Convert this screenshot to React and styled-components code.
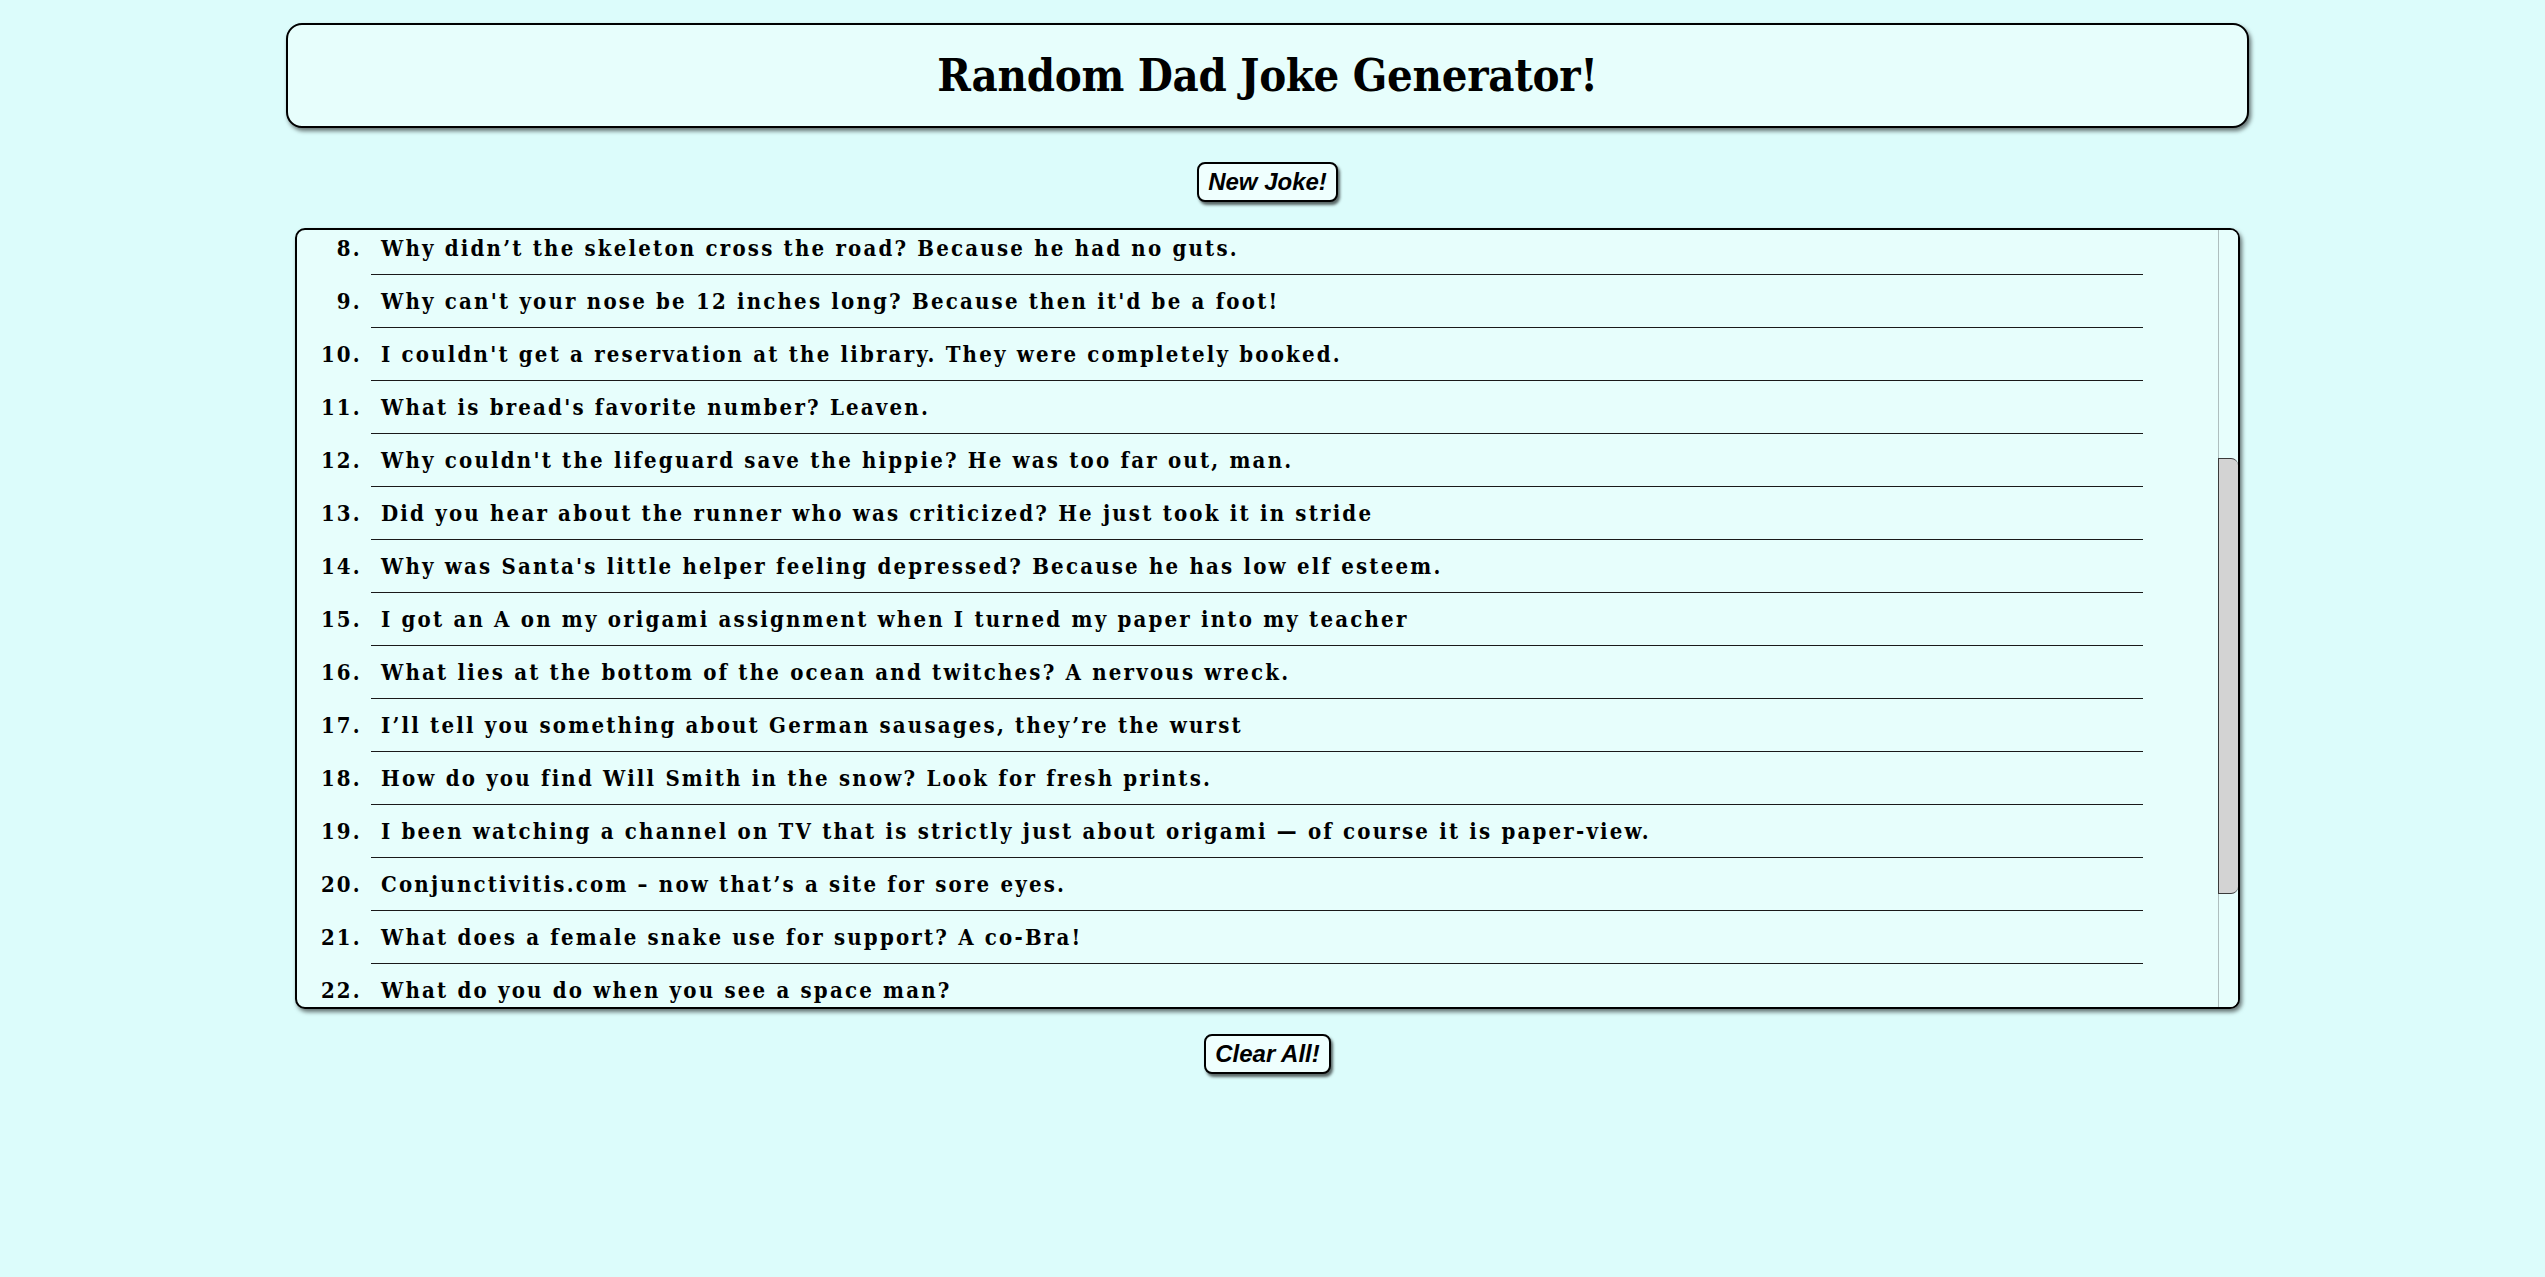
import React, { useLayoutEffect, useRef, useState } from "react";
import styled, { createGlobalStyle } from "styled-components";

const GlobalStyle = createGlobalStyle`
  html, body {
    margin: 0;
    padding: 0;
    background: #dcfcfb;
  }
  body {
    font-family: "DejaVu Serif", serif;
    color: #000;
  }
`;

const Page = styled.main`
  display: flex;
  flex-direction: column;
  align-items: center;
  padding: 23px 10px 0 0;
  min-height: 1254px;
`;

const Header = styled.header`
  box-sizing: border-box;
  width: 1963px;
  height: 105px;
  display: flex;
  align-items: center;
  justify-content: center;
  background: #e7fefc;
  border: 2px solid #000;
  border-radius: 16px;
  box-shadow: 2px 3px 4px rgba(0, 0, 0, 0.55);
`;

const Title = styled.h1`
  margin: 0;
  font-family: "DejaVu Serif Condensed", "DejaVu Serif", serif;
  font-stretch: condensed;
  font-weight: 700;
  font-size: 45px;
  letter-spacing: -0.3px;
  line-height: 1;
`;

const Button = styled.button`
  box-sizing: border-box;
  margin-top: ${(p) => p.$top}px;
  height: 40px;
  padding: 0 9px;
  background: #effffe;
  border: 2px solid #000;
  border-radius: 8px;
  box-shadow: 2px 3px 3px rgba(0, 0, 0, 0.6);
  font-family: "Liberation Sans", Arial, sans-serif;
  font-style: italic;
  font-weight: 700;
  font-size: 24px;
  color: #000;
  cursor: pointer;
`;

const ListBox = styled.section`
  box-sizing: border-box;
  margin-top: 26px;
  width: 1945px;
  height: 781px;
  display: flex;
  background: #e7fefc;
  border: 2px solid #000;
  border-radius: 10px;
  box-shadow: 2px 3px 4px rgba(0, 0, 0, 0.55);
  overflow: hidden;
`;

const ScrollArea = styled.div`
  flex: 1;
  overflow-y: scroll;
  overflow-x: hidden;
  scrollbar-width: none;
  &::-webkit-scrollbar {
    display: none;
  }
`;

const Track = styled.div`
  box-sizing: border-box;
  width: 20px;
  flex: none;
  border-left: 1px solid #aebebe;
  background: #e7fefc;
`;

const Thumb = styled.div`
  box-sizing: border-box;
  margin-left: -1px;
  width: 20px;
  background: #d3d3d3;
  border: 1px solid #3a3a3a;
  border-right: none;
  border-radius: 0 7px 7px 0;
`;

const JokeList = styled.ol`
  margin: 0 75px 0 74px;
  padding: 27px 0 33px 0;
  list-style: decimal outside;
`;

const JokeItem = styled.li`
  box-sizing: border-box;
  height: 53px;
  padding-left: 10px;
  line-height: 52px;
  border-bottom: 1px solid #1a1a1a;
  font-family: "DejaVu Serif Condensed", "DejaVu Serif", serif;
  font-stretch: condensed;
  font-weight: 700;
  font-size: 22px;
  letter-spacing: 2.2px;
  white-space: nowrap;

  &:last-child {
    border-bottom: none;
  }
`;

const jokes = [
  "What do you call a fake noodle? An impasta.",
  "I'm reading a book about anti-gravity. It's impossible to put down!",
  "Why don't eggs tell jokes? They'd crack each other up.",
  "What do you call a bear with no teeth? A gummy bear.",
  "I used to hate facial hair, but then it grew on me.",
  "Why did the scarecrow win an award? He was outstanding in his field.",
  "How does a penguin build its house? Igloos it together.",
  "Why didn’t the skeleton cross the road? Because he had no guts.",
  "Why can't your nose be 12 inches long? Because then it'd be a foot!",
  "I couldn't get a reservation at the library. They were completely booked.",
  "What is bread's favorite number? Leaven.",
  "Why couldn't the lifeguard save the hippie? He was too far out, man.",
  "Did you hear about the runner who was criticized? He just took it in stride",
  "Why was Santa's little helper feeling depressed? Because he has low elf esteem.",
  "I got an A on my origami assignment when I turned my paper into my teacher",
  "What lies at the bottom of the ocean and twitches? A nervous wreck.",
  "I’ll tell you something about German sausages, they’re the wurst",
  "How do you find Will Smith in the snow? Look for fresh prints.",
  "I been watching a channel on TV that is strictly just about origami — of course it is paper-view.",
  "Conjunctivitis.com – now that’s a site for sore eyes.",
  "What does a female snake use for support? A co-Bra!",
  "What do you do when you see a space man?",
  "Why do seagulls fly over the sea? Because if they flew over the bay, they'd be bagels.",
  "What do you call a factory that makes okay products? A satisfactory.",
  "Did you hear about the claustrophobic astronaut? He just needed a little space.",
];

export default function App() {
  const areaRef = useRef(null);
  const [thumb, setThumb] = useState({ top: 228, height: 436 });

  useLayoutEffect(() => {
    const el = areaRef.current;
    if (!el) return;
    const update = () => {
      const track = el.clientHeight;
      const ratio = el.clientHeight / el.scrollHeight;
      setThumb({
        top: Math.round((el.scrollTop / el.scrollHeight) * track),
        height: Math.round(ratio * track),
      });
    };
    el.scrollTop = 406;
    update();
    el.addEventListener("scroll", update);
    return () => el.removeEventListener("scroll", update);
  }, []);

  return (
    <>
      <GlobalStyle />
      <Page>
        <Header>
          <Title>Random Dad Joke Generator!</Title>
        </Header>
        <Button $top={34}>New Joke!</Button>
        <ListBox>
          <ScrollArea ref={areaRef}>
            <JokeList>
              {jokes.map((j, i) => (
                <JokeItem key={i}>{j}</JokeItem>
              ))}
            </JokeList>
          </ScrollArea>
          <Track>
            <Thumb style={{ marginTop: thumb.top, height: thumb.height }} />
          </Track>
        </ListBox>
        <Button $top={25}>Clear All!</Button>
      </Page>
    </>
  );
}
